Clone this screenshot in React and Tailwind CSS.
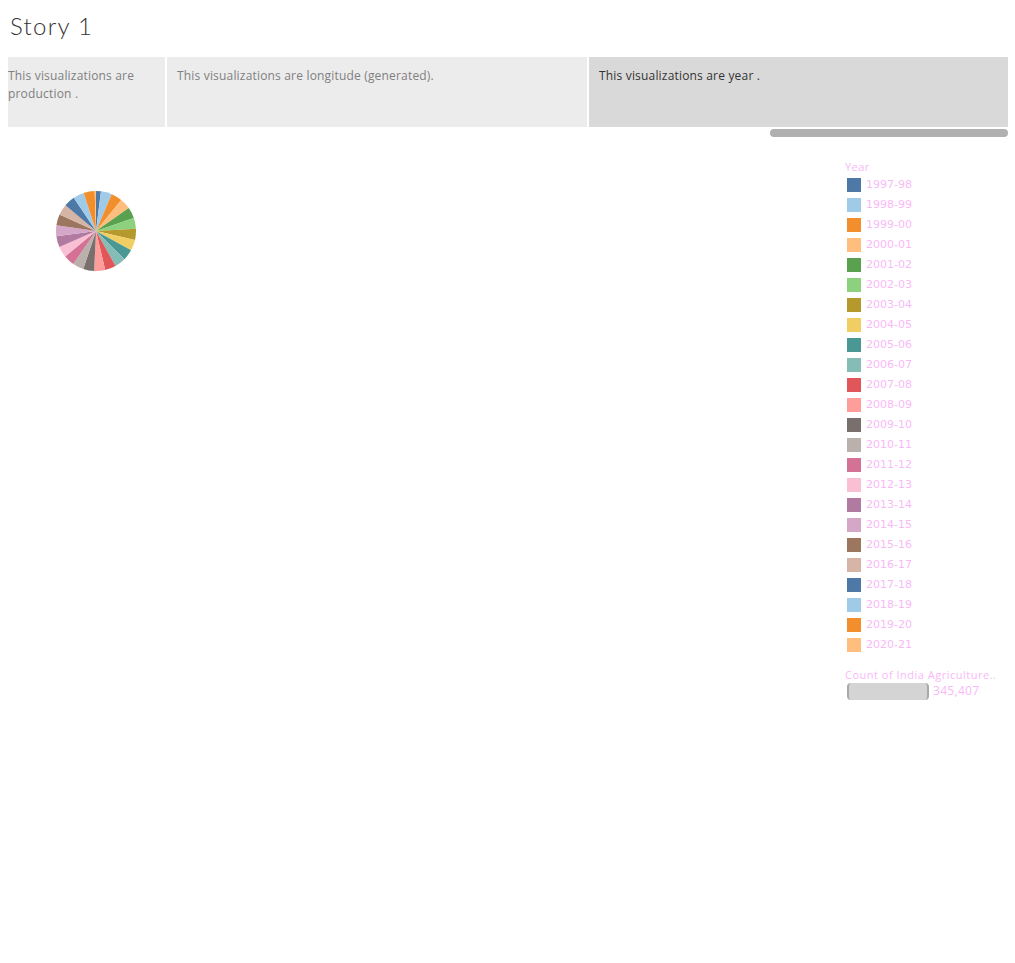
import React from 'react';

const palette = [
    '#4e79a7', '#a0cbe8', '#f28e2b', '#ffbe7d', '#59a14f', '#8cd17d', '#b6992d', '#f1ce63',
    '#499894', '#86bcb6', '#e15759', '#ff9d9a', '#79706e', '#bab0ac', '#d37295', '#fabfd2',
    '#b07aa1', '#d4a6c8', '#9d7660', '#d7b5a6',
];

const years = [
    '1997-98', '1998-99', '1999-00', '2000-01', '2001-02', '2002-03', '2003-04', '2004-05',
    '2005-06', '2006-07', '2007-08', '2008-09', '2009-10', '2010-11', '2011-12', '2012-13',
    '2013-14', '2014-15', '2015-16', '2016-17', '2017-18', '2018-19', '2019-20', '2020-21',
];

// rough share of records per year, read off the pie
const weights = years.map((y, i) => (i === 0 ? 0.45 : i === years.length - 1 ? 0.12 : 1));

const PieChart = () => {
    const total = weights.reduce((a, b) => a + b, 0);
    const r = 40;
    const cx = 40;
    const cy = 40;
    let start = 0;

    return (
        <svg width="80" height="80" viewBox="0 0 80 80">
            {weights.map((w, i) => {
                const end = start + (w / total) * Math.PI * 2;
                const x1 = cx + r * Math.sin(start);
                const y1 = cy - r * Math.cos(start);
                const x2 = cx + r * Math.sin(end);
                const y2 = cy - r * Math.cos(end);
                const large = end - start > Math.PI ? 1 : 0;
                const d = `M${cx},${cy} L${x1},${y1} A${r},${r} 0 ${large} 1 ${x2},${y2} Z`;
                start = end;
                return <path key={i} d={d} fill={palette[i % palette.length]} />;
            })}
        </svg>
    );
};

const tabs = [
    { text: 'This visualizations are production .', width: 'w-[157px]', pad: 'pl-0 pr-[10px]', active: false },
    { text: 'This visualizations are longitude (generated).', width: 'w-[420px]', pad: 'px-[10px]', active: false },
    { text: 'This visualizations are year .', width: 'w-[419px]', pad: 'px-[10px]', active: true },
];

const App = () => {
    return (
        <div className="min-h-screen bg-white pl-2 pr-[7px] font-['Open_Sans',sans-serif]">
            {/* Title */}
            <div className="h-[57px] flex items-center pl-[2px] pb-[5px]">
                <h1 className="font-['Lato',sans-serif] text-[24px] font-light text-[#333333] tracking-[1.3px]">Story 1</h1>
            </div>

            {/* Story points */}
            <div className="flex gap-[2px] h-[70px]">
                {tabs.map((tab, idx) => (
                    <div
                        key={idx}
                        className={`${tab.width} ${tab.pad} pt-[10px] text-[12px] leading-[18px] tracking-[0.18px] ${
                            tab.active ? 'bg-[#d9d9d9] text-[#333333]' : 'bg-[#ececec] text-[#808080]'
                        }`}
                    >
                        {tab.text}
                    </div>
                ))}
            </div>

            {/* Scrollbar */}
            <div className="flex justify-end mt-[2px]">
                <div className="w-[238px] h-[8px] rounded-full bg-[#b0b0b0]" />
            </div>

            {/* Sheet */}
            <div className="flex">
                <div className="w-[837px] pl-[48px] pt-[54px]">
                    <PieChart />
                </div>

                <div className="pt-[23px] font-['DejaVu_Sans',sans-serif] text-[#f9b9f9]">
                    <div className="font-['Open_Sans',sans-serif] text-[11px] leading-[14px] tracking-[0.4px]">Year</div>
                    <div className="flex flex-col pt-[1px]">
                        {years.map((y, i) => (
                            <div key={y} className="flex items-center h-[20px] pl-[2px]">
                                <span
                                    className="w-[14px] h-[14px] mr-[5px]"
                                    style={{ backgroundColor: palette[i % palette.length] }}
                                />
                                <span className="text-[11px] leading-[14px]">{y}</span>
                            </div>
                        ))}
                    </div>

                    <div className="mt-[13px] font-['Open_Sans',sans-serif] text-[11px] leading-[14px] tracking-[0.5px] whitespace-nowrap">
                        Count of India Agriculture..
                    </div>
                    <div className="flex items-center gap-[4px] pl-[2px]">
                        <div className="w-[82px] h-[17px] bg-[#d4d4d4] rounded-[4px] border-x-2 border-[#a8a8a8]" />
                        <span className="font-['Open_Sans',sans-serif] text-[12px] tracking-[0.3px]">345,407</span>
                    </div>
                </div>
            </div>
        </div>
    );
};

export default App;
